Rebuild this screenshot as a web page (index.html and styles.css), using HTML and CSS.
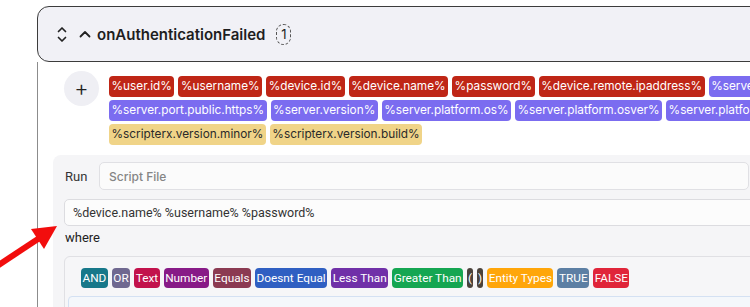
FILE: index.html
```html
<!DOCTYPE html>
<html lang="en">
<head>
    <meta charset="UTF-8">
    <meta name="viewport" content="width=device-width, initial-scale=1.0">
    <title>Events - onAuthenticationFailed</title>
    <link rel="stylesheet" href="styles.css">
</head>
<body>
<div class="event-card">
    <div class="event-header">
        <svg class="icon-sort" width="10" height="17" viewBox="0 0 10 17">
            <path d="M1.5 5.5 L5 2 L8.5 5.5 M1.5 11.5 L5 15 L8.5 11.5" fill="none" stroke="#222" stroke-width="1.7" stroke-linecap="round" stroke-linejoin="round"/>
        </svg>
        <svg class="icon-chevron" width="12" height="8" viewBox="0 0 12 8">
            <path d="M1.5 6.5 L6 2 L10.5 6.5" fill="none" stroke="#222" stroke-width="1.8" stroke-linecap="round" stroke-linejoin="round"/>
        </svg>
        <span class="event-title">onAuthenticationFailed</span>
        <span class="event-count">1</span>
    </div>

    <div class="event-body">
        <div class="vars">
            <button class="add-btn">+</button>
            <div class="tag-list">
                <div class="tag-row">
                    <span class="tag red">%user.id%</span>
                    <span class="tag red">%username%</span>
                    <span class="tag red">%device.id%</span>
                    <span class="tag red">%device.name%</span>
                    <span class="tag red">%password%</span>
                    <span class="tag red">%device.remote.ipaddress%</span>
                    <span class="tag purple">%server.name%</span>
                </div>
                <div class="tag-row">
                    <span class="tag purple">%server.port.public.https%</span>
                    <span class="tag purple">%server.version%</span>
                    <span class="tag purple">%server.platform.os%</span>
                    <span class="tag purple">%server.platform.osver%</span>
                    <span class="tag purple">%server.platform.arch%</span>
                </div>
                <div class="tag-row">
                    <span class="tag yellow">%scripterx.version.minor%</span>
                    <span class="tag yellow">%scripterx.version.build%</span>
                </div>
            </div>
        </div>

        <div class="action-panel">
            <div class="run-row">
                <label class="run-label">Run</label>
                <input class="run-input" type="text" placeholder="Script File">
            </div>
            <input class="args-input" type="text" value="%device.name% %username% %password%">
            <div class="where-label">where</div>
            <div class="where-box">
                <div class="ops">
                    <span class="op and">AND</span>
                    <span class="op or">OR</span>
                    <span class="op text">Text</span>
                    <span class="op number">Number</span>
                    <span class="op equals">Equals</span>
                    <span class="op not-equal">Doesnt Equal</span>
                    <span class="op less">Less Than</span>
                    <span class="op greater">Greater Than</span>
                    <span class="op paren">(</span>
                    <span class="op paren">)</span>
                    <span class="op entity">Entity Types</span>
                    <span class="op true">TRUE</span>
                    <span class="op false">FALSE</span>
                </div>
                <div class="condition-area"></div>
            </div>
        </div>
    </div>
</div>

<svg class="pointer-arrow" width="70" height="90" viewBox="0 190 70 90">
    <line x1="-6" y1="268" x2="41" y2="237" stroke="#f20d0d" stroke-width="6"/>
    <polygon points="57,226 44,249 31,229" fill="#f20d0d"/>
</svg>
</body>
</html>
```

FILE: styles.css
```css
body {
    margin: 0;
    padding: 6px 0 0 37px;
    font-family: Inter, "Noto Sans", sans-serif;
    color: #222;
    background: #fff;
    overflow: hidden;
    height: 307px;
    box-sizing: border-box;
}

.event-card {
    width: 820px;
}

.event-header {
    display: flex;
    align-items: center;
    height: 54px;
    padding-left: 19px;
    background-color: #f1f1f6;
    border: 1px solid #3c3c3c;
    border-radius: 12px;
}

.icon-chevron {
    margin-left: 12px;
}

.event-title {
    margin-left: 6px;
    font-size: 15px;
    font-weight: 600;
    color: #1e1e1e;
}

.event-count {
    margin-left: 11px;
    width: 13px;
    height: 19px;
    border: 1px dashed #555;
    border-radius: 8px;
    font-size: 13px;
    line-height: 19px;
    text-align: center;
}

.event-body {
    border-left: 1px solid #8c8c8c;
    padding: 9px 0 0 15px;
    height: 300px;
}

.vars {
    display: flex;
    padding-left: 11px;
}

.add-btn {
    width: 35px;
    height: 35px;
    border: none;
    border-radius: 50%;
    background-color: #efeff4;
    font-family: Inter, sans-serif;
    font-size: 22px;
    font-weight: 300;
    color: #222;
    padding: 0;
    line-height: 33px;
    flex-shrink: 0;
}

.tag-list {
    margin-left: 10px;
    margin-top: 5px;
}

.tag-row {
    display: flex;
    gap: 4px;
    white-space: nowrap;
    margin-bottom: 3px;
}

.tag {
    font-size: 11.8px;
    line-height: 21px;
    padding: 0 2.5px;
    border-radius: 4px;
    color: #fff;
}

.tag.red { background-color: #bf2616; }
.tag.purple { background-color: #7b6cf0; }
.tag.yellow { background-color: #f0d488; color: #2a2a2a; }

.action-panel {
    margin-top: 7px;
    background-color: #f5f5f7;
    border-radius: 8px 0 0 0;
    padding: 7px 0 0 11px;
    height: 200px;
}

.run-row {
    display: flex;
    align-items: center;
}

.run-label {
    width: 34px;
    padding-left: 1px;
    font-family: Roboto, Arial, sans-serif;
    font-size: 13px;
    color: #333;
}

.run-input {
    width: 650px;
    height: 28px;
    box-sizing: border-box;
    border: 1px solid #e0e0e4;
    border-radius: 5px;
    background-color: #fbfbfb;
    padding: 0 9px;
    font-family: Inter, sans-serif;
    font-size: 12px;
}

.run-input::placeholder {
    color: #858585;
    font-weight: 500;
}

.args-input {
    display: block;
    margin-top: 9px;
    width: 740px;
    height: 27px;
    box-sizing: border-box;
    border: 1px solid #dcdce0;
    border-radius: 5px;
    background-color: #fcfcfc;
    padding: 0 8px;
    font-family: Roboto, Arial, sans-serif;
    font-size: 12.5px;
    color: #333;
}

.where-label {
    margin-top: 2px;
    padding-left: 1px;
    font-family: Roboto, Arial, sans-serif;
    font-size: 13px;
    line-height: 20px;
    color: #222;
}

.where-box {
    margin-top: 8px;
    border: 1px solid #e0e0e4;
    border-radius: 6px;
    background-color: #f6f6f8;
    padding: 11px 0 0 3px;
    height: 80px;
}

.ops {
    display: flex;
    gap: 4px;
    padding-left: 13px;
}

.op {
    font-family: Roboto, "Liberation Sans", sans-serif;
    font-size: 11.8px;
    line-height: 20px;
    padding: 0 1.5px;
    border-radius: 4px;
    color: #fff;
}

.op.and { background-color: #17788a; }
.op.or { background-color: #6f6890; }
.op.text { background-color: #c2124c; }
.op.number { background-color: #871a87; }
.op.equals { background-color: #8b3a52; }
.op.not-equal { background-color: #2f5fc2; }
.op.less { background-color: #7030a8; }
.op.greater { background-color: #15a652; }
.op.paren { background-color: #4a423c; padding: 0 1px; }
.op.entity { background-color: #ffa60a; }
.op.true { background-color: #5c7fa4; }
.op.false { background-color: #e0253a; }

.condition-area {
    margin-top: 8px;
    height: 40px;
    border: 1px solid #d4e1f3;
    border-radius: 4px;
    background-color: #f4f7fb;
}

.pointer-arrow {
    position: absolute;
    left: 0;
    top: 190px;
}
```
